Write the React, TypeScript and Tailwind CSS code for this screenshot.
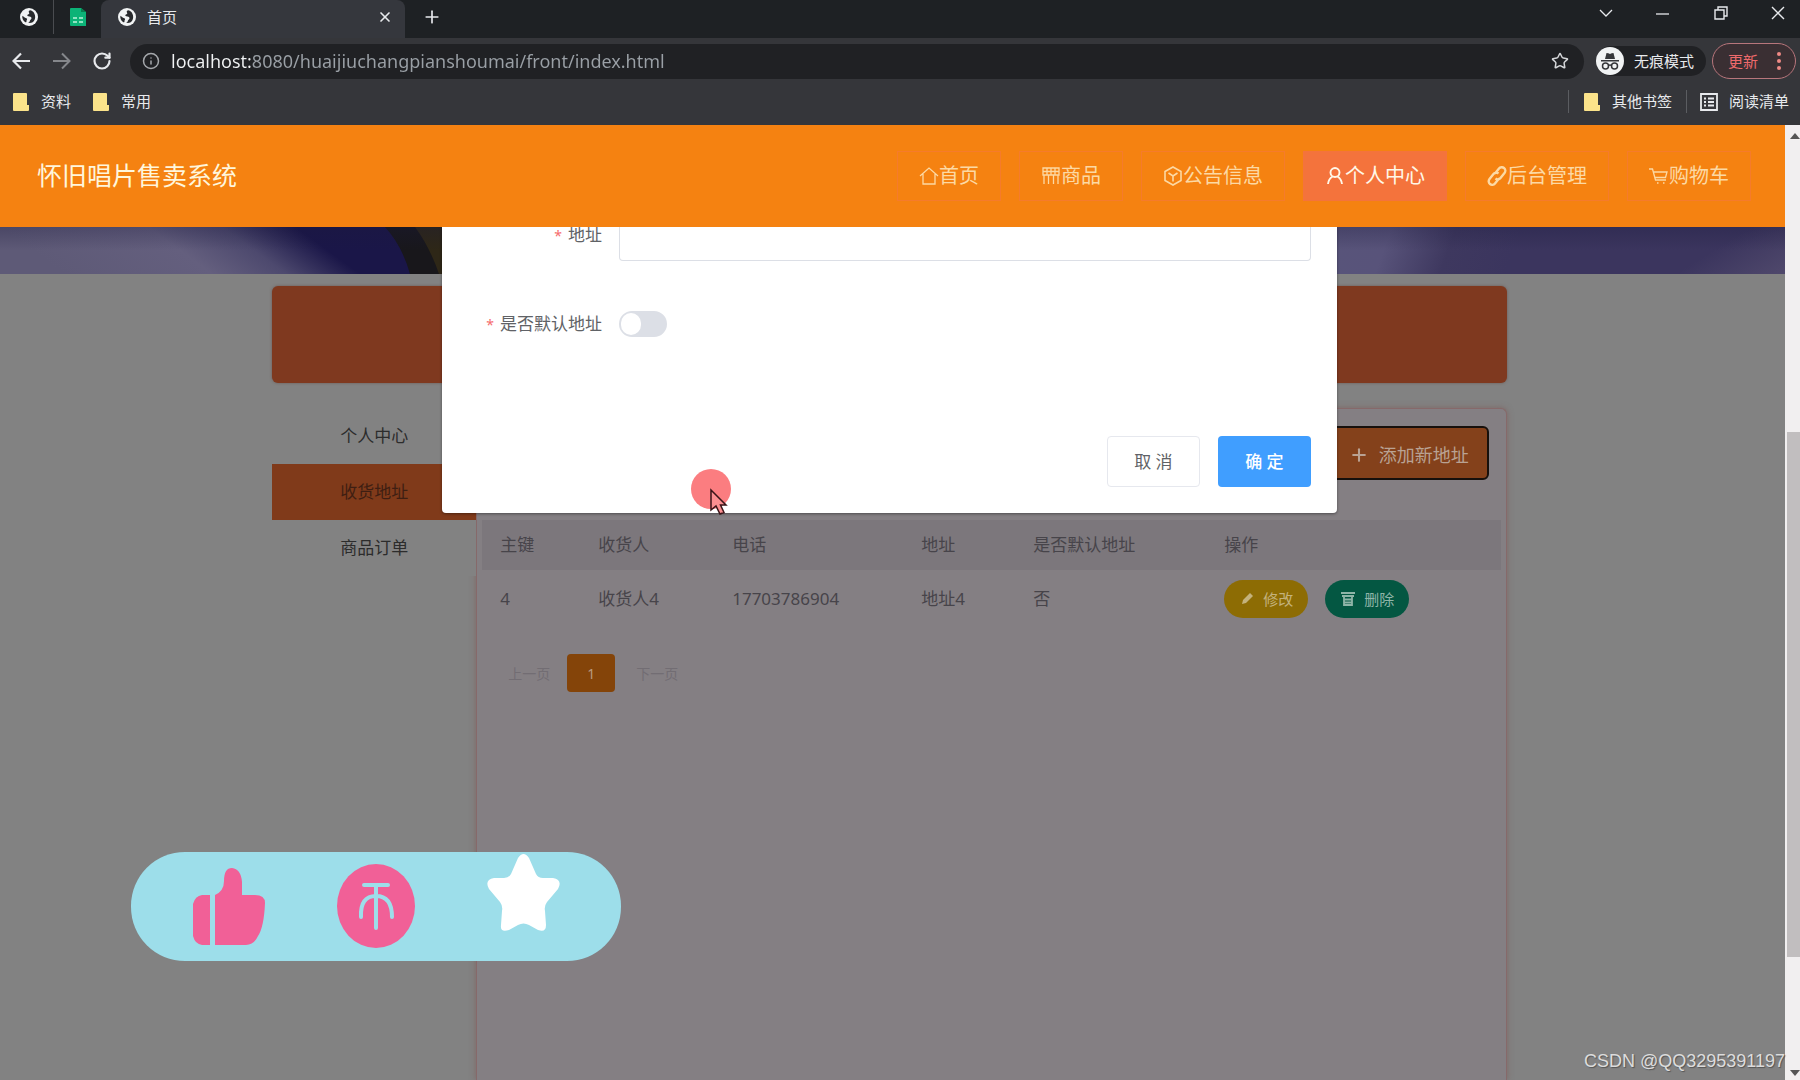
import React from "react";
import { Info, Plus, RotateCw, Star, X } from "lucide-react";

const SANS = "font-['Noto_Sans','Noto_Sans_CJK_SC',sans-serif]";

function Globe() {
  return (
    <svg viewBox="0 0 18 18" className="size-[18px] shrink-0" aria-hidden="true">
      <circle cx="9" cy="9" r="9" fill="#f1f3f4" />
      <path
        d="M10.5 2.2c-1.8.2-2.2 1.6-1.4 2.6.6.8-.2 1.4-1.2 1.6-1 .3-.6 1.6.4 1.8 1.6.2 3 .4 3.2 1.8.1 1.3-1.3 1.6-1.6 2.8-.2.9-.9 1.6-1.8 1.8 2 .9 4.6.2 6-1.8 1.4-2.2 1.4-5.2.2-7.4C13.6 3.8 12.2 2.7 10.5 2.2ZM2.400 7.800c-.5 2.400.6 5 2.600 6.200.8.4 1.600.2 1.500-.8-.1-.9.7-1.200.6-2.100-.1-1-1.300-.9-2-1.400C4 9.100 3.500 8.200 2.400 7.800Z"
        fill="#27292c"
      />
    </svg>
  );
}

function Folder() {
  return (
    <svg viewBox="0 0 16 18" className="h-[18px] w-4 shrink-0" aria-hidden="true">
      <path d="M0 1a1 1 0 0 1 1-1h12a1 1 0 0 1 1 1v11h2v5a1 1 0 0 1-1 1H1a1 1 0 0 1-1-1Z" fill="#fbe38a" />
    </svg>
  );
}

function ChromeBars() {
  return (
    <div className="shrink-0 bg-[#35363a] text-[15px] text-[#e8eaed]">
      <div className="flex h-[38px] bg-[#1e2124]">
        <div className="flex w-[54px] pb-1">
          <button aria-label="标签页" className="flex h-full w-full items-center border-r border-[#4a4c50] pl-5">
            <Globe />
          </button>
        </div>
        <button aria-label="表格" className="flex w-[47px] items-center pb-1 pl-[15px]">
          <svg viewBox="0 0 18 18" className="size-[18px]" aria-hidden="true">
            <path d="M2 0h10l5 4v14H2a1 1 0 0 1-1-1V1a1 1 0 0 1 1-1Z" fill="#0cb377" />
            <path d="M12 0l5 4h-5Z" fill="#07804f" />
            <path d="M4 9h4v2H4zM10 9h4v2h-4zM4 13h4v2H4zM10 13h4v2h-4z" fill="#8fe3c2" />
          </svg>
        </button>
        <div className="flex w-[304px] items-center rounded-t-lg bg-[#35373d] pb-1 pl-[17px] pr-3">
          <Globe />
          <span className="ml-[11px] grow">首页</span>
          <button aria-label="关闭标签页">
            <X className="size-4" strokeWidth={2.5} />
          </button>
        </div>
        <button aria-label="新标签页" className="ml-[17px] pb-1">
          <Plus className="size-5" strokeWidth={2} />
        </button>
        <div className="ml-auto flex items-center gap-10 pb-3 pr-[14px]">
          <button aria-label="搜索标签页">
            <svg viewBox="0 0 16 16" className="size-4" fill="none" stroke="currentColor" strokeWidth="1.3"><path d="M2 5l6 6 6-6" /></svg>
          </button>
          <button aria-label="最小化" className="px-px">
            <svg viewBox="0 0 16 16" className="size-4" fill="none" stroke="currentColor" strokeWidth="1.3"><path d="M1 9h13" /></svg>
          </button>
          <button aria-label="还原" className="px-px">
            <svg viewBox="0 0 16 16" className="size-4" fill="none" stroke="currentColor" strokeWidth="1.4"><path d="M2 5h9v9H2zM5 5V2h9v9h-3" /></svg>
          </button>
          <button aria-label="关闭">
            <svg viewBox="0 0 16 16" className="size-4" fill="none" stroke="currentColor" strokeWidth="1.4"><path d="M2 2l12 12M14 2L2 14" /></svg>
          </button>
        </div>
      </div>

      <div className="flex h-[46px] items-center pl-3 pr-1">
        <button aria-label="后退">
          <svg viewBox="0 0 18 18" className="size-[18px]" fill="none" stroke="currentColor" strokeWidth="2.2"><path d="M18 9H2M9 1.500L1.500 9 9 16.500" /></svg>
        </button>
        <button aria-label="前进" className="ml-[23px] text-[#85878b]">
          <svg viewBox="0 0 18 18" className="size-[18px]" fill="none" stroke="currentColor" strokeWidth="2"><path d="M0 9h16M9 1.500L16.500 9 9 16.500" /></svg>
        </button>
        <button aria-label="刷新" className="ml-[21px]">
          <RotateCw className="size-5" strokeWidth={2.6} />
        </button>
        <div className="ml-[18px] flex h-[35px] grow items-center rounded-full bg-[#202124] pl-3 pr-[15px]">
          <Info className="size-[18px] text-[#a5a8ac]" />
          <input
            aria-label="地址栏"
            readOnly
            value="localhost:8080/huaijiuchangpianshoumai/front/index.html"
            className="ml-[11px] grow bg-[linear-gradient(90deg,#f1f3f4_80px,#9aa0a6_80px)] bg-clip-text font-['Noto_Sans',sans-serif] text-[18px] text-transparent outline-none"
          />
          <button aria-label="收藏">
            <Star className="size-[18px] text-[#d5d7da]" strokeWidth={2} />
          </button>
        </div>
        <button className="ml-3 flex h-[30px] items-center gap-[10px] rounded-full bg-[#202124] pr-3">
          <svg viewBox="0 0 28 28" className="size-7" aria-hidden="true">
            <circle cx="14" cy="14" r="14" fill="#f1f3f4" />
            <path d="M9 12l1.500-6q2 0 3.500 1 1.500-1 3.500-1L19 12ZM5 13h18v1.500H5Z" fill="#35363a" />
            <g fill="none" stroke="#35363a" strokeWidth="1.500"><circle cx="9.500" cy="19" r="3" /><circle cx="18.500" cy="19" r="3" /><path d="M12.500 18.500q1.500-1 3 0" /></g>
          </svg>
          无痕模式
        </button>
        <button className="ml-[6px] flex h-9 w-[84px] items-center justify-between rounded-full border border-[#b8767c] bg-[#3a2f33] pl-[15px] pr-[14px] text-[#ee6a6c]">
          更新
          <svg viewBox="0 0 4 18" className="h-[18px] w-1" fill="#f08a86" aria-hidden="true"><circle cx="2" cy="2" r="2" /><circle cx="2" cy="9" r="2" /><circle cx="2" cy="16" r="2" /></svg>
        </button>
      </div>

      <div className="flex h-[41px] items-center pb-[6px] pl-[13px] pr-[11px]">
        <button className="flex items-center gap-3"><Folder />资料</button>
        <button className="ml-[22px] flex items-center gap-3"><Folder />常用</button>
        <div className="ml-auto flex items-center">
          <button className="flex items-center gap-3 border-l border-[#5b5d61] pl-[15px]"><Folder />其他书签</button>
          <button className="ml-[14px] flex items-center gap-[11px] border-l border-[#5b5d61] pl-[13px]">
            <svg viewBox="0 0 18 18" className="size-[18px]" fill="none" stroke="currentColor" strokeWidth="1.8" aria-hidden="true"><path d="M1 1h16v16H1zM4 5.500h2M8 5.500h6M4 9h2M8 9h6M4 12.500h2M8 12.500h6" /></svg>
            阅读清单
          </button>
        </div>
      </div>
    </div>
  );
}

type NavEntry = { label: string; icon: React.ReactNode; active?: boolean };

const NAV: NavEntry[] = [
  { label: "首页", icon: <path d="M1 10L10 2l9 8M4 8v10h12V8" /> },
  { label: "商品", icon: <path d="M2 2h16v7H2zM6 2v7M10 2v7M14 2v7M2 5.500h16M3 9v9M7.500 9v9M12.500 9v9M17 9v9" /> },
  { label: "公告信息", icon: <path strokeWidth="1.6" d="M10 1l8 4.500v9L10 19l-8-4.500v-9ZM5.500 7L10 10l4.500-3M10 10v5.500" /> },
  { label: "个人中心", active: true, icon: <path strokeWidth="1.9" d="M10 2a4.500 4.500 0 1 1 0 9 4.500 4.500 0 0 1 0-9ZM7.500 10.500Q3.500 13 3 18M12.500 10.500Q16.500 13 17 18" /> },
  { label: "后台管理", icon: <path strokeWidth="2.4" d="M8 7.500l4-5a3.500 3.500 0 0 1 5.500 4.500l-4 5a3.500 3.500 0 0 1-5 .5M12 12.500l-4 5A3.500 3.500 0 0 1 2.500 13l4-5a3.500 3.500 0 0 1 5-.5" /> },
  { label: "购物车", icon: <path d="M0 3h3.500l3 11H17M4.500 6H18l-1.500 5.500H6M8 17h1.500M14 17h1.500" /> },
];

function SiteHeader() {
  return (
    <header className="relative z-20 flex h-[102px] items-center justify-between bg-[#f58211] pl-[37px] pr-[34px]">
      <h1 className="text-[25px] text-[#fff6dc]">怀旧唱片售卖系统</h1>
      <nav className="flex gap-[18px] text-[20px]">
        {NAV.map((n) => (
          <a
            key={n.label}
            href="#"
            className={
              n.active
                ? "flex h-[50px] items-center border border-[#f4733c] bg-[#f4733c] px-[21px] text-[#fff8e8]"
                : "flex h-[50px] items-center border border-[#f57b2c] px-[21px] text-[#fcd9a4]"
            }
          >
            <svg viewBox="0 0 20 20" className="size-5" fill="none" stroke="currentColor" strokeWidth="1.3" aria-hidden="true">{n.icon}</svg>
            {n.label}
          </a>
        ))}
      </nav>
    </header>
  );
}

function Banner() {
  return (
    <svg viewBox="0 0 1785 46" preserveAspectRatio="none" className="block h-[47px] w-full" aria-hidden="true">
      <defs>
        <linearGradient id="left" gradientUnits="userSpaceOnUse" x1="0" y1="0" x2="100" y2="-140">
          <stop offset="0" stopColor="#5e5a77" />
          <stop offset=".5" stopColor="#645f7e" />
          <stop offset=".75" stopColor="#4d496e" />
          <stop offset="1" stopColor="#1a1648" />
        </linearGradient>
        <linearGradient id="right" gradientUnits="userSpaceOnUse" x1="1336" y1="0" x2="1500" y2="60">
          <stop offset="0" stopColor="#58547a" />
          <stop offset=".3" stopColor="#58537a" />
          <stop offset=".65" stopColor="#3e385f" />
          <stop offset="1" stopColor="#3b355e" />
        </linearGradient>
        <linearGradient id="corner" gradientUnits="userSpaceOnUse" x1="1735" y1="10" x2="1765" y2="60">
          <stop offset="0" stopColor="#50496c" stopOpacity="0" />
          <stop offset="1" stopColor="#50496c" />
        </linearGradient>
        <linearGradient id="shade" x1="0" y1="0" x2="0" y2="1">
          <stop offset="0" stopColor="#1c1a3c" stopOpacity=".3" />
          <stop offset=".5" stopColor="#1c1a3c" stopOpacity="0" />
        </linearGradient>
      </defs>
      <rect width="900" height="46" fill="url(#left)" />
      <rect x="900" width="885" height="46" fill="url(#right)" />
      <path d="M385 0h80v46h-55Q402 18 385 0Z" fill="#18171b" />
      <path d="M415 0h50v46h-26Q430 20 415 0Z" fill="#2e2717" />
      <rect x="1680" width="105" height="46" fill="url(#corner)" />
      <rect width="1785" height="46" fill="url(#shade)" />
    </svg>
  );
}

function AddressPanel() {
  return (
    <section className="grow rounded-t-md border border-b-0 border-[#86696a] bg-[#847f83] px-[5px] pt-[17px] shadow-[0_0_6px_#7d6664]">
      <div className="flex justify-end pr-3">
        <button className="flex h-[54px] items-center gap-[10px] rounded-md border-2 border-[#17100c] bg-[#84411b] px-[18px] pt-1 text-[18px] text-[#b9a293]">
          <Plus className="size-5" strokeWidth={2.5} />
          添加新地址
        </button>
      </div>
      <table className="mt-[40px] w-full table-fixed text-left text-[17px] text-[#47444a]">
        <colgroup>
          <col className="w-[116px]" />
          <col className="w-[134px]" />
          <col className="w-[189px]" />
          <col className="w-[112px]" />
          <col className="w-[191px]" />
          <col />
        </colgroup>
        <thead>
          <tr className="h-[50px] bg-[#7c777c]">
            <th className="pl-[18px] font-normal">主键</th>
            <th className="font-normal">收货人</th>
            <th className="font-normal">电话</th>
            <th className="font-normal">地址</th>
            <th className="font-normal">是否默认地址</th>
            <th className="font-normal">操作</th>
          </tr>
        </thead>
        <tbody>
          <tr className="h-[58px]">
            <td className="pl-[18px]">4</td>
            <td>收货人4</td>
            <td>17703786904</td>
            <td>地址4</td>
            <td>否</td>
            <td>
              <div className="flex gap-[17px] text-[15px]">
                <button className="flex h-[38px] w-[84px] items-center justify-center gap-2 rounded-full bg-[#8d6c04] text-[#c4b27c]">
                  <svg viewBox="0 0 16 16" className="size-4" fill="currentColor" aria-hidden="true"><path d="M3 13l1-4 7-7 3 3-7 7Z" /></svg>
                  修改
                </button>
                <button className="flex h-[38px] w-[84px] items-center justify-center gap-2 rounded-full bg-[#045742] text-[#8fb5a8]">
                  <svg viewBox="0 0 16 16" className="size-4" fill="none" stroke="currentColor" strokeWidth="1.8" aria-hidden="true"><path d="M1 2h14M2 5h12M4 5v9h8V5M4 8.500h8M4 11.500h8" /></svg>
                  删除
                </button>
              </div>
            </td>
          </tr>
        </tbody>
      </table>
      <nav aria-label="分页" className="mt-[26px] flex h-[38px] pl-[9px] text-[14px] text-[#726d73]">
        <button className="w-[76px]">上一页</button>
        <button className="w-12 rounded-sm bg-[#844409] text-[#b89a80]">1</button>
        <button className="w-[84px]">下一页</button>
      </nav>
    </section>
  );
}

function AddressDialog() {
  return (
    <div role="dialog" aria-label="添加新地址" className="absolute inset-x-0 top-[102px] z-10 flex justify-center pr-[6px]">
      <form className="w-[50.3%] rounded-b-sm bg-white pb-[26px] pr-[26px] text-[17px] text-[#606266] shadow-[0_1px_3px_rgba(0,0,0,0.4)]" onSubmit={(e) => e.preventDefault()}>
        <div className="flex h-[34px]">
          <label htmlFor="address" className="w-[160px] shrink-0 text-right leading-[16px]"><span className="mr-[6px] text-[14px] text-[#f56c6c]">*</span>地址</label>
          <input id="address" className="ml-[17px] h-[34px] min-w-0 grow rounded-b border border-t-0 border-[#dcdfe6] px-4 outline-none" />
        </div>
        <div className="mt-[50px] flex h-[26px] items-center">
          <label htmlFor="default" className="w-[160px] shrink-0 text-right"><span className="mr-[6px] text-[14px] text-[#f56c6c]">*</span>是否默认地址</label>
          <input
            id="default"
            type="checkbox"
            role="switch"
            className="ml-[17px] h-[26px] w-12 appearance-none rounded-full border-2 border-[#dcdfe6] bg-[#dcdfe6] before:block before:h-[22px] before:w-5 before:rounded-full before:bg-white checked:bg-[#409eff]"
          />
        </div>
        <div className="mt-[99px] flex justify-end gap-[18px]">
          <button type="button" className="h-[51px] w-[93px] rounded border border-[#e6e8ee] bg-white">取 消</button>
          <button type="submit" className="h-[51px] w-[93px] rounded bg-[#409eff] font-medium text-white">确 定</button>
        </div>
      </form>
    </div>
  );
}

function ReactionBar() {
  return (
    <div className="absolute left-[131px] top-[727px] z-20 flex h-[109px] w-[490px] items-center rounded-[54px] bg-[#9ddeea]">
      <svg viewBox="0 0 490 109" className="size-full" aria-hidden="true">
        <g fill="#f16097">
          <path d="M79 43v50H71q-7-1-9-9V52q2-8 9-9Z" />
          <path d="M84 43q9-4 9-14 0-13 8-13 9 1 10 14v13h13q10 0 10 8-1 24-7 33-4 9-12 9H84Z" />
          <ellipse cx="245" cy="54" rx="39" ry="42" />
        </g>
        <g fill="none" stroke="#9ddeea" strokeWidth="4" strokeLinecap="round">
          <path d="M233 33h24M245 33v43M230 65q-1-21 15-21t16 21" />
        </g>
        <path
          d="M387 6q5.500-8 11 0l7 16q2 4 7 4h10q10 2 5 11l-11 13q-3 4-2 9l1 14q0 8-8 5l-9-5q-5.500-3-11 0l-9 5q-9 3-8-5l1-14q1-5-2-9l-11-13q-5-9 5-11h10q5 0 7-4Z"
          fill="#fff"
        />
      </svg>
    </div>
  );
}

function Pointer() {
  return (
    <div className="absolute left-[691px] top-[344px] z-20">
      <svg viewBox="0 0 44 48" className="h-12 w-11" aria-hidden="true">
        <circle cx="20" cy="20" r="20" fill="#fb7d80" />
        <path d="M20 21v20l5-4 4 8 4-1.500-3.500-7.500H35Z" fill="#fb8f91" stroke="#3a1518" strokeWidth="1.500" />
      </svg>
    </div>
  );
}

const MENU = ["个人中心", "收货地址", "商品订单"];

export default function App() {
  return (
    <div className={`flex h-screen flex-col overflow-hidden ${SANS}`}>
      <ChromeBars />
      <div className="relative flex min-h-0 grow">
        <div className="relative flex min-w-0 grow flex-col bg-[#828282]">
          <SiteHeader />
          <Banner />
          <main className="flex grow justify-center pr-[6px] pt-3">
            <div className="flex w-[69.4%] flex-col">
              <div className="h-[97px] rounded-md bg-[#7f391f] shadow-[0_0_3px_#6d5a54]" />
              <div className="mt-[25px] flex grow items-stretch">
                <aside className="relative z-[1] w-[204px] shrink-0 self-start bg-[#828282] text-center text-[17px] text-[#2c2c2c]">
                  {MENU.map((m) => (
                    <a key={m} href="#" className={m === "收货地址" ? "block h-14 bg-[#803a1a] leading-[56px] text-[#3e1e12]" : "block h-14 leading-[56px]"}>
                      {m}
                    </a>
                  ))}
                </aside>
                <AddressPanel />
              </div>
            </div>
          </main>
          <AddressDialog />
          <ReactionBar />
          <Pointer />
        </div>
        <div className="flex w-[15px] shrink-0 flex-col items-end bg-[#f1eff0] pb-1 pt-2">
          <svg viewBox="0 0 10 6" className="h-[6px] w-[10px]" aria-hidden="true"><path d="M5 0l5 6H0Z" fill="#555" /></svg>
          <div className="mt-[293px] h-[525px] w-[13px] bg-[#c1bebf]" />
          <svg viewBox="0 0 10 6" className="mt-auto h-[6px] w-[10px]" aria-hidden="true"><path d="M0 0h10L5 6Z" fill="#555" /></svg>
        </div>
        <p className="absolute bottom-[5px] right-[15px] z-30 font-['Liberation_Sans',sans-serif] text-[18px] text-[#dcdcdc] [text-shadow:1px_1px_1px_#555]">CSDN @QQ3295391197</p>
      </div>
    </div>
  );
}
